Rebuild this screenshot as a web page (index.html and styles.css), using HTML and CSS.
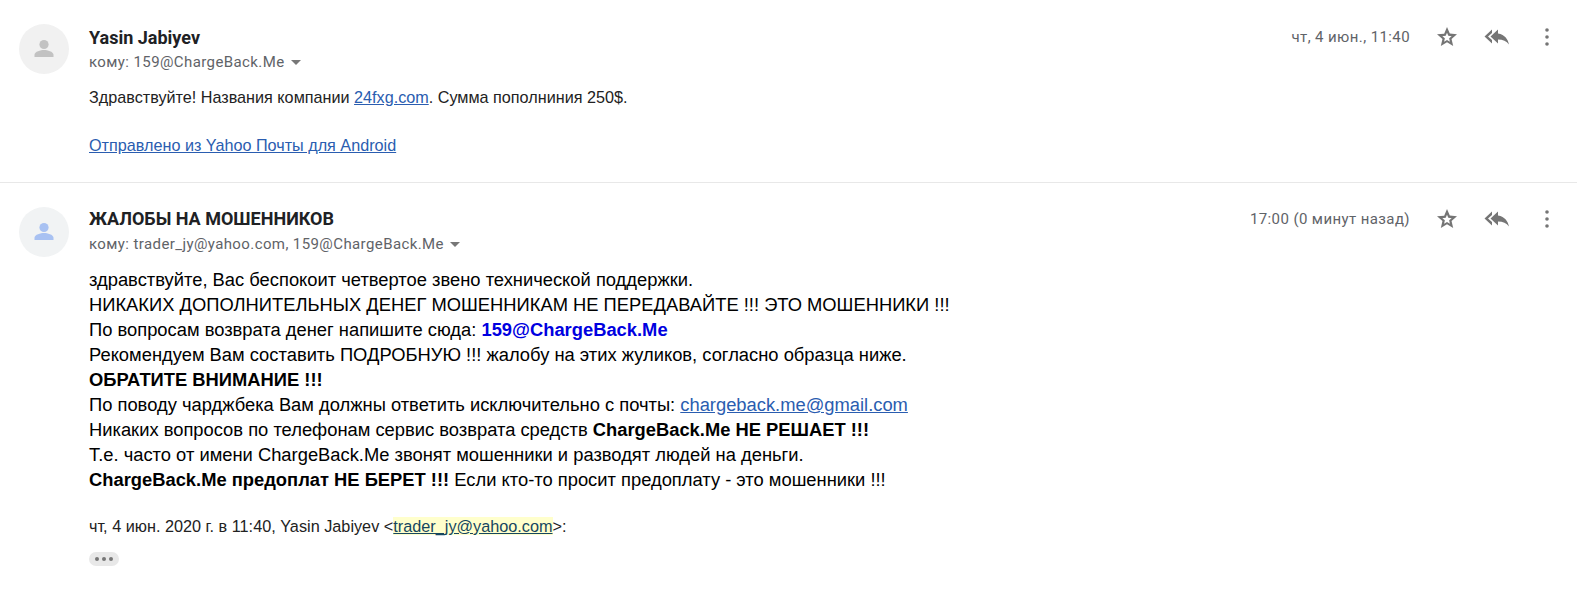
FILE: index.html
```html
<!DOCTYPE html>
<html lang="ru">
<head>
<meta charset="utf-8">
<title>Mail</title>
<link rel="stylesheet" href="styles.css">
</head>
<body>
<section class="msg first">
  <div class="avatar gray"><svg viewBox="0 0 24 24" width="24" height="24"><circle cx="12" cy="7.500" r="4.600"/><path d="M2.500 20v-2.200c0-3.200 6.300-4.800 9.500-4.800s9.500 1.600 9.500 4.800V20z"/></svg></div>
  <div class="main">
    <div class="head">
      <div class="who">
        <div class="name">Yasin Jabiyev</div>
        <div class="to">кому: 159@ChargeBack.Me <span class="caret"></span></div>
      </div>
      <div class="tools">
        <span class="time">чт, 4 июн., 11:40</span>
        <svg class="star" viewBox="0 0 24 24" width="24" height="24"><path d="M22 9.240l-7.190-.62L12 2 9.190 8.630 2 9.240l5.460 4.730L5.820 21 12 17.270 18.180 21l-1.630-7.030L22 9.240zM12 14.900l-2.900 1.750.77-3.300-2.560-2.220 3.380-.29L12 7.720l1.310 3.120 3.380.29-2.560 2.220.77 3.300L12 14.900z"/></svg>
        <svg class="reply" viewBox="0 0 28 24" width="28" height="24"><path d="M10 8V4.500L2.500 11.500 10 18.500V15l-4-3.500z"/><path d="M16 8.500V4.500L8.500 11.500 16 18.500v-4c5 0 8.500 1.600 11 5-1-5-4-9.800-11-11z"/></svg>
        <svg class="more" viewBox="0 0 4 20" width="4" height="20"><circle cx="2" cy="3" r="1.800"/><circle cx="2" cy="10" r="1.800"/><circle cx="2" cy="17" r="1.800"/></svg>
      </div>
    </div>
    <div class="body plain">
      <p>Здравствуйте! Названия компании <a href="#">24fxg.com</a>. Сумма пополниния 250$.</p>
      <p class="sig"><a href="#">Отправлено из Yahoo Почты для Android</a></p>
    </div>
  </div>
</section>
<section class="msg second">
  <div class="avatar blue"><svg viewBox="0 0 24 24" width="24" height="24"><circle cx="12" cy="7.500" r="4.600"/><path d="M2.500 20v-2.200c0-3.200 6.300-4.800 9.500-4.800s9.500 1.600 9.500 4.800V20z"/></svg></div>
  <div class="main">
    <div class="head">
      <div class="who">
        <div class="name">ЖАЛОБЫ НА МОШЕННИКОВ</div>
        <div class="to">кому: trader_jy@yahoo.com, 159@ChargeBack.Me <span class="caret"></span></div>
      </div>
      <div class="tools">
        <span class="time">17:00 (0 минут назад)</span>
        <svg class="star" viewBox="0 0 24 24" width="24" height="24"><path d="M22 9.240l-7.190-.62L12 2 9.190 8.630 2 9.240l5.460 4.730L5.820 21 12 17.270 18.180 21l-1.630-7.030L22 9.240zM12 14.900l-2.900 1.750.77-3.300-2.560-2.220 3.380-.29L12 7.720l1.310 3.120 3.380.29-2.560 2.220.77 3.300L12 14.900z"/></svg>
        <svg class="reply" viewBox="0 0 28 24" width="28" height="24"><path d="M10 8V4.500L2.500 11.500 10 18.500V15l-4-3.500z"/><path d="M16 8.500V4.500L8.500 11.500 16 18.500v-4c5 0 8.500 1.600 11 5-1-5-4-9.800-11-11z"/></svg>
        <svg class="more" viewBox="0 0 4 20" width="4" height="20"><circle cx="2" cy="3" r="1.800"/><circle cx="2" cy="10" r="1.800"/><circle cx="2" cy="17" r="1.800"/></svg>
      </div>
    </div>
    <div class="body rich">
      <div>здравствуйте, Вас беспокоит четвертое звено технической поддержки.</div>
      <div>НИКАКИХ ДОПОЛНИТЕЛЬНЫХ ДЕНЕГ МОШЕННИКАМ НЕ ПЕРЕДАВАЙТЕ !!! ЭТО МОШЕННИКИ !!!</div>
      <div>По вопросам возврата денег напишите сюда: <b class="mail">159@ChargeBack.Me</b></div>
      <div>Рекомендуем Вам составить ПОДРОБНУЮ !!! жалобу на этих жуликов, согласно образца ниже.</div>
      <div><b>ОБРАТИТЕ ВНИМАНИЕ !!!</b></div>
      <div>По поводу чарджбека Вам должны ответить исключительно с почты: <a href="#">chargeback.me@gmail.com</a></div>
      <div>Никаких вопросов по телефонам сервис возврата средств <b>ChargeBack.Me НЕ РЕШАЕТ !!!</b></div>
      <div>Т.е. часто от имени ChargeBack.Me звонят мошенники и разводят людей на деньги.</div>
      <div><b>ChargeBack.Me предоплат НЕ БЕРЕТ !!!</b> Если кто-то просит предоплату - это мошенники !!!</div>
    </div>
    <div class="quote">чт, 4 июн. 2020 г. в 11:40, Yasin Jabiyev &lt;<a href="#"><mark>trader_jy@yahoo.com</mark></a>&gt;:</div>
    <div class="dots"><i></i><i></i><i></i></div>
  </div>
</section>
</body>
</html>
```
FILE: styles.css
```css
html, body { margin: 0; padding: 0; background: #fff; }
body { width: 1577px; height: 602px; overflow: hidden; font-family: "Liberation Sans", Arial, sans-serif; color: #222; }
.msg { display: flex; padding-left: 19px; padding-right: 27px; }
.first { height: 183px; padding-top: 24px; box-sizing: border-box; border-bottom: 1px solid #e8e8e8; }
.second { padding-top: 24px; }
.avatar { width: 50px; height: 50px; border-radius: 50%; display: flex; align-items: center; justify-content: center; flex: none; }
.avatar svg { display: block; }
.gray { background: #f1f1f1; }
.gray svg { fill: #c2c2c2; }
.blue { background: #f1f3f4; }
.blue svg { fill: #a8c1f2; }
.main { flex: 1; margin-left: 20px; min-width: 0; }
.head { display: flex; justify-content: space-between; align-items: flex-start; }
.name { font-family: Roboto, sans-serif; font-weight: 700; font-size: 18px; line-height: 24px; color: #202124; }
.first .name { margin-top: 2px; }
.to { font-family: Roboto, sans-serif; font-size: 15px; line-height: 20px; color: #5f6368; margin-top: 2px; letter-spacing: .4px; display: flex; align-items: center; gap: 6px; }
.second .to { margin-top: 3px; }
.caret { display: inline-block; width: 0; height: 0; border: 5px solid transparent; border-top-color: #777; border-bottom-width: 0; }
.tools { display: flex; align-items: center; height: 24px; margin-top: 1px; }
.second .tools { margin-top: 0; }
.time { font-family: Roboto, sans-serif; font-size: 15px; letter-spacing: .4px; color: #5f6368; margin-right: 25px; }
.tools svg { fill: #757575; flex: none; }
.reply { margin-left: 23px; }
.more { margin-left: 35px; margin-right: 1px; }
.plain { font-size: 16.2px; line-height: 24px; margin-top: 13px; }
.plain p { margin: 0; }
.plain .sig { margin-top: 24px; }
.rich { font-size: 18.35px; margin-top: 13px; line-height: 25px; color: #000; }
a { color: #2a5db0; text-decoration: underline; }
.mail { color: #0000e0; }
.quote { font-size: 16.25px; line-height: 20px; margin-top: 24px; color: #222; }
.quote a { color: #15465f; }
mark { background: #ffffcc; color: inherit; }
.dots { margin-top: 16px; width: 30px; height: 14px; border-radius: 7px; background: #e8e8e8; display: flex; align-items: center; justify-content: center; gap: 3px; }
.dots i { width: 4px; height: 4px; border-radius: 50%; background: #777; display: block; }
```
